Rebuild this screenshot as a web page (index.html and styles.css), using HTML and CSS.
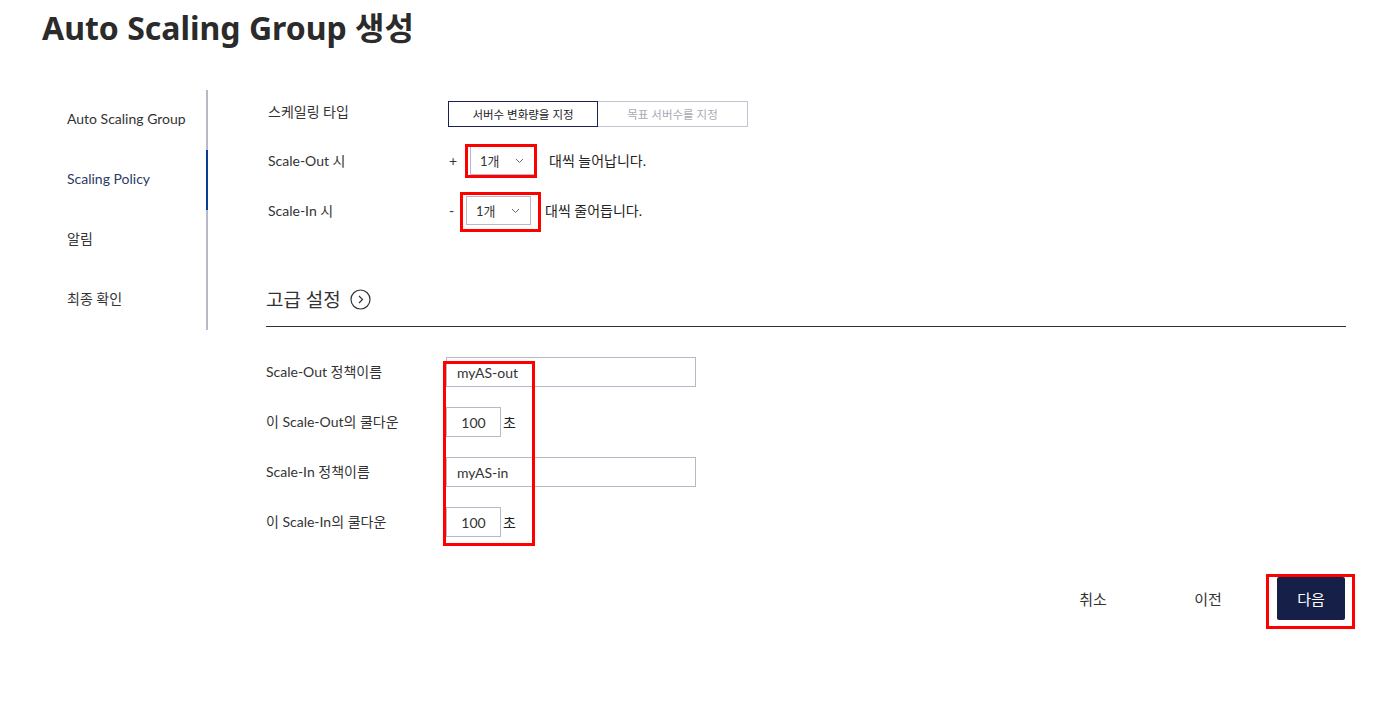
FILE: index.html
```html
<!DOCTYPE html>
<html lang="ko">
<head>
<meta charset="utf-8">
<title>Auto Scaling Group 생성</title>
<link rel="stylesheet" href="styles.css">
</head>
<body>
<div class="page">
  <h1 class="title">Auto Scaling Group 생성</h1>
  <div class="layout">
    <nav class="sidebar">
      <div class="nav-item">Auto Scaling Group</div>
      <div class="nav-item active">Scaling Policy</div>
      <div class="nav-item">알림</div>
      <div class="nav-item">최종 확인</div>
    </nav>
    <main class="content">
      <div class="row first">
        <div class="label">스케일링 타입</div>
        <div class="toggle">
          <button class="toggle-btn on">서버수 변화량을 지정</button>
          <button class="toggle-btn off">목표 서버수를 지정</button>
        </div>
      </div>
      <div class="row">
        <div class="label">Scale-Out 시</div>
        <span class="sign">+</span>
        <div class="select-wrap">
          <div class="select"><span>1개</span><svg class="chev" width="9" height="6" viewBox="0 0 9 6"><path d="M1 1l3.5 3.5L8 1" fill="none" stroke="#666" stroke-width="1"/></svg></div>
          <div class="mark mark-out"></div>
        </div>
        <span class="suffix">대씩 늘어납니다.</span>
      </div>
      <div class="row in">
        <div class="label">Scale-In 시</div>
        <span class="sign">-</span>
        <div class="select-wrap">
          <div class="select"><span>1개</span><svg class="chev" width="9" height="6" viewBox="0 0 9 6"><path d="M1 1l3.5 3.5L8 1" fill="none" stroke="#666" stroke-width="1"/></svg></div>
          <div class="mark mark-in"></div>
        </div>
        <span class="suffix">대씩 줄어듭니다.</span>
      </div>

      <div class="section-head">
        <span>고급 설정</span>
        <svg class="circle-icon" width="21" height="21" viewBox="0 0 21 21"><circle cx="10.5" cy="10.5" r="9.5" fill="none" stroke="#333" stroke-width="1.2"/><path d="M9 7l3.5 3.5L9 14" fill="none" stroke="#333" stroke-width="1.2"/></svg>
      </div>

      <div class="form">
        <div class="frow">
          <div class="flabel">Scale-Out 정책이름</div>
          <div class="input wide">myAS-out</div>
        </div>
        <div class="frow">
          <div class="flabel">이 Scale-Out의 쿨다운</div>
          <div class="input short">100</div><span class="unit">초</span>
        </div>
        <div class="frow">
          <div class="flabel">Scale-In 정책이름</div>
          <div class="input wide">myAS-in</div>
        </div>
        <div class="frow">
          <div class="flabel">이 Scale-In의 쿨다운</div>
          <div class="input short">100</div><span class="unit">초</span>
        </div>
        <div class="mark mark-form"></div>
      </div>

      <div class="footer">
        <button class="btn plain cancel">취소</button>
        <button class="btn plain prev">이전</button>
        <div class="next-wrap">
          <button class="btn primary">다음</button>
          <div class="mark mark-next"></div>
        </div>
      </div>
    </main>
  </div>
</div>
</body>
</html>
```

FILE: styles.css
```css
* { box-sizing: border-box; }
html, body { margin: 0; padding: 0; background: #fff; }
body {
  font-family: Lato, "Noto Sans CJK KR", sans-serif;
  font-size: 14px;
  color: #333;
}
.page { padding: 0 0 0 42px; width: 1398px; min-height: 713px; }
.title {
  margin: 0;
  padding-top: 6px;
  height: 86px;
  font-family: "Noto Sans", "Noto Sans CJK KR", sans-serif;
  font-weight: 700;
  font-size: 32px;
  line-height: 44px;
  color: #2b2b2b;
}
.layout { display: flex; }
.sidebar { width: 166px; margin-top: 4px; flex: none; align-self: flex-start; }
.nav-item {
  height: 60px;
  display: flex;
  align-items: center;
  padding-left: 25px;
  padding-bottom: 4px;
  border-right: 2px solid #b9b8c8;
  color: #333;
}
.nav-item.active { border-right-color: #0a3f8f; color: #2a3a66; }
.content { margin-left: 58px; width: 1080px; }
.row { height: 50px; display: flex; align-items: center; }
.row.first { height: 49px; }
.label { width: 182px; padding-left: 2px; }
.toggle { display: flex; align-self: flex-start; margin-top: 15px; }
.toggle-btn {
  width: 150px; height: 26px;
  font-family: Lato, "Noto Sans CJK KR", sans-serif;
  font-size: 11.5px;
  background: #fff;
  padding: 0;
}
.toggle-btn.on { border: 1px solid #1a2150; color: #222; }
.toggle-btn.off { border: 1px solid #c3c2cf; border-left: none; color: #a9a9b3; }
.sign { width: 18px; margin-left: 1px; }
.sign + .select-wrap { margin-left: 3px; }
.row.in .sign + .select-wrap { margin-left: -1px; }
.select-wrap { position: relative; }
.select {
  width: 65px; height: 29px;
  border: 1px solid #b9b8c8;
  display: flex; align-items: center; justify-content: space-between;
  padding: 0 10px 0 9px;
  font-size: 13px;
}
.chev { margin-top: 1px; }
.suffix { margin-left: 14px; color: #222; }
.mark { position: absolute; border: 3px solid #f00; pointer-events: none; }
.mark-out { left: -5px; top: -2px; width: 72px; height: 34px; }
.mark-in { left: -6px; top: -4px; width: 81px; height: 40px; }
.section-head {
  margin-top: 40px;
  height: 52px;
  border-bottom: 1px solid #333;
  display: flex; align-items: center;
  padding-bottom: 4px;
  font-size: 19px;
  color: #333;
}
.circle-icon { margin-left: 9px; margin-top: 2px; }
.form { position: relative; margin-top: 20px; }
.frow { height: 50px; display: flex; align-items: center; }
.flabel { width: 180px; font-size: 14px; padding-bottom: 2px; }
.input {
  height: 30px; border: 1px solid #b9b8c8;
  display: flex; align-items: center; font-size: 14px; color: #333;
}
.input.wide { width: 250px; padding-left: 10px; }
.input.short { width: 55px; justify-content: center; }
.unit { margin-left: 2px; color: #222; }
.mark-form { left: 177px; top: 14px; width: 92px; height: 185px; }
.footer {
  margin-top: 30px;
  display: flex; justify-content: flex-end; align-items: center;
}
.btn {
  font-family: Lato, "Noto Sans CJK KR", sans-serif;
  font-size: 15px;
  height: 43px; width: 68px; padding: 0;
  border: none; background: #fff; color: #333;
}
.btn.prev { margin-left: 47px; }
.next-wrap { position: relative; margin-left: 35px; margin-right: 1px; }
.btn.primary { background: #161f48; color: #fff; border-radius: 2px; display: block; }
.mark-next { left: -11px; top: -3px; width: 89px; height: 55px; }
```
